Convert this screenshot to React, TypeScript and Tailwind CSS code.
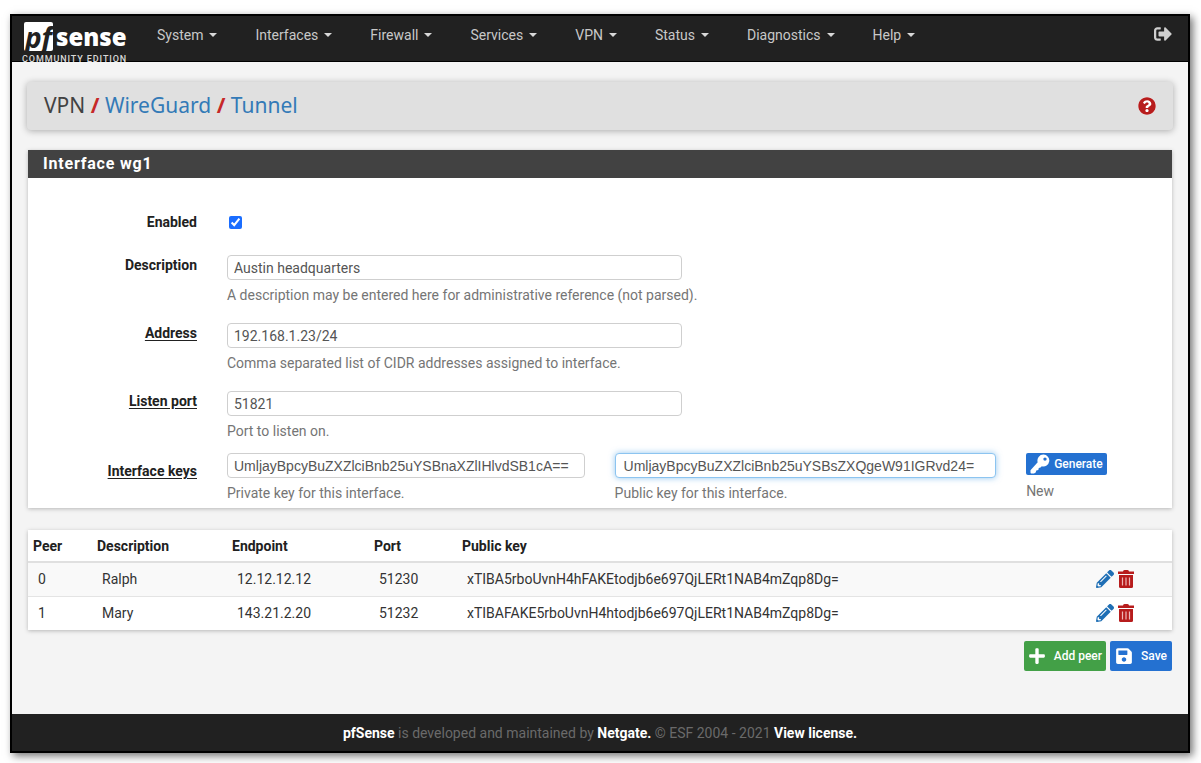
import { FaPencilAlt, FaPlus, FaQuestionCircle, FaSave, FaSignOutAlt } from "react-icons/fa"

const menuItems = ["System", "Interfaces", "Firewall", "Services", "VPN", "Status", "Diagnostics", "Help"]

const peers = [
  { id: 0, description: "Ralph", endpoint: "12.12.12.12", port: "51230", publicKey: "xTIBA5rboUvnH4hFAKEtodjb6e697QjLERt1NAB4mZqp8Dg=" },
  { id: 1, description: "Mary", endpoint: "143.21.2.20", port: "51232", publicKey: "xTIBAFAKE5rboUvnH4htodjb6e697QjLERt1NAB4mZqp8Dg=" },
]

const inputClass = "block w-full h-[25px] rounded border border-[#cfcfcf] bg-white px-1.5 text-sm text-[#555] outline-none"

function Logo() {
  return (
    <a href="#" aria-label="pfSense community edition" className="flex w-[108px] flex-col pt-1.5">
      <span className="flex items-center gap-[3px] pl-0.5">
        <span className="flex h-[29px] w-[29px] items-center justify-center rounded-xs bg-white font-['Open_Sans',sans-serif] text-[28px] leading-6 font-bold text-[#212121] italic">
          pf
        </span>
        <span className="font-['Open_Sans',sans-serif] text-2xl leading-6 font-extrabold text-white">sense</span>
      </span>
      <span className="text-[9px] leading-4 font-medium tracking-widest whitespace-nowrap text-[#d8d8d8]">COMMUNITY EDITION</span>
    </a>
  )
}

function KeyIcon() {
  return (
    <svg viewBox="0 0 20 20" className="h-5 w-5" aria-hidden="true">
      <path
        fill="currentColor"
        fillRule="evenodd"
        d="M13.500.5a6 6 0 1 1-1.700 11.800L10.500 13.600 8.800 14 8.300 16 6.300 16.400 5.700 18.400 4 19.500H1.500Q.5 19.500.5 18.500V16.200L7.700 8.300A6 6 0 0 1 13.500.5zM15 3.400a1.700 1.700 0 1 0 0 3.400 1.700 1.700 0 0 0 0-3.400z"
      />
    </svg>
  )
}

function TrashIcon() {
  return (
    <svg viewBox="0 0 16 18" className="h-[18px] w-4" fill="none" aria-hidden="true">
      <path d="M5 1.500Q5 0 6.500 0h3Q11 0 11 1.500h5V4H0V1.500z" fill="#b71c1c" />
      <path d="M1 5h14v11.500q0 1.500-1.500 1.500h-11Q1 18 1 16.500z" fill="#b71c1c" />
      <path d="M4.500 7.500v8M8 7.500v8M11.500 7.500v8" stroke="#eeb8b8" strokeWidth="1.200" />
    </svg>
  )
}

type FieldProps = {
  id: string
  label: string
  value: string
  help: string
  required?: boolean
}

function Field({ id, label, value, help, required }: FieldProps) {
  return (
    <div className="grid grid-cols-[169px_1fr] gap-x-[30px]">
      <label htmlFor={id} className={`text-right text-sm font-bold text-[#212121] ${required ? "underline underline-offset-2" : ""}`}>
        {label}
      </label>
      <div>
        <div className="max-w-[455px]">
          <input id={id} type="text" defaultValue={value} className={inputClass} />
        </div>
        <p className="mt-[5px] text-sm text-[#757575]">{help}</p>
      </div>
    </div>
  )
}

export default function App() {
  return (
    <div className="min-h-screen bg-white pt-3.5 pr-[11px] pb-3 pl-2.5 font-[Roboto,sans-serif]">
      <div className="border-2 border-black bg-[#f4f4f4] shadow-[3px_3px_8px_rgba(0,0,0,0.55)]">
        <header className="flex h-[46px] items-start border-b border-black bg-[#212121] pr-4 pl-2.5">
          <Logo />
          <nav className="flex flex-1 gap-[38px] pt-[9px] pl-[27px]">
            {menuItems.map((item) => (
              <a key={item} href="#" className="flex items-center gap-1.5 text-sm text-[#c8c8c8]">
                {item}
                <span className="h-0 w-0 border-x-4 border-t-4 border-x-transparent border-t-[#d8d8d8]" />
              </a>
            ))}
          </nav>
          <button type="button" aria-label="Log out" className="mt-[9px] text-[#d0d0d0]">
            <FaSignOutAlt size={18} />
          </button>
        </header>

        <main className="px-4 pt-5 pb-[43px]">
          <div className="-mx-px flex h-12 items-center justify-between rounded bg-[#e0e0e0] px-[17px] shadow-[0_1px_7px_rgba(0,0,0,0.3)]">
            <h1 className="font-['Noto_Sans',sans-serif] text-[21px] text-[#424242]">
              VPN <span className="font-bold text-[#c62828]">/</span>{" "}
              <a href="#" className="text-[#337ab7]">WireGuard</a> <span className="font-bold text-[#c62828]">/</span>{" "}
              <a href="#" className="text-[#337ab7]">Tunnel</a>
            </h1>
            <a href="#" aria-label="Help" className="rounded-full bg-white text-[#b71c1c]">
              <FaQuestionCircle size={18} />
            </a>
          </div>

          <form onSubmit={(e) => e.preventDefault()}>
            <section className="mt-5 bg-white pb-[5px] shadow-[0_1px_4px_rgba(0,0,0,0.25)]">
              <h2 className="bg-[#424242] px-[15px] text-base leading-7 font-bold tracking-wider text-white">Interface wg1</h2>

              <div className="mt-[34px] grid grid-cols-[169px_1fr] items-center gap-x-[30px]">
                <label htmlFor="enabled" className="text-right text-sm font-bold text-[#212121]">Enabled</label>
                <input id="enabled" type="checkbox" defaultChecked className="ml-0.5 h-[13px] w-[13px] accent-[#1a6dff]" />
              </div>

              <div className="mt-[23px] flex flex-col gap-[18px]">
                <Field id="description" label="Description" value="Austin headquarters" help="A description may be entered here for administrative reference (not parsed)." />
                <Field id="address" label="Address" value="192.168.1.23/24" help="Comma separated list of CIDR addresses assigned to interface." required />
                <Field id="port" label="Listen port" value="51821" help="Port to listen on." required />
              </div>

              <div className="mt-3 grid grid-cols-[169px_1fr] gap-x-[30px] pr-[30px]">
                <label htmlFor="privateKey" className="pt-2 text-right text-sm font-bold text-[#212121] underline underline-offset-2">Interface keys</label>
                <div className="grid grid-cols-[358fr_382fr_116fr] gap-x-[30px]">
                  <div>
                    <input id="privateKey" type="text" defaultValue="UmljayBpcyBuZXZlciBnb25uYSBnaXZlIHlvdSB1cA==" className={`${inputClass} font-['Liberation_Sans',sans-serif]`} />
                    <p className="mt-[5px] text-sm text-[#757575]">Private key for this interface.</p>
                  </div>
                  <div>
                    <input
                      type="text"
                      aria-label="Public key"
                      defaultValue="UmljayBpcyBuZXZlciBnb25uYSBsZXQgeW91IGRvd24="
                      className="block h-[25px] w-full rounded border border-[#8cc4f0] bg-white px-2 font-['Liberation_Sans',sans-serif] text-sm text-[#555] shadow-[0_0_6px_rgba(102,175,233,0.7)] outline-none"
                    />
                    <p className="mt-[5px] text-sm text-[#757575]">Public key for this interface.</p>
                  </div>
                  <div>
                    <button type="button" className="flex h-[22px] items-center gap-1 rounded-xs bg-[#2471d1] px-1 text-xs font-medium text-white">
                      <KeyIcon />
                      Generate
                    </button>
                    <p className="mt-1.5 text-sm text-[#757575]">New</p>
                  </div>
                </div>
              </div>
            </section>

            <table className="mt-[22px] w-full table-fixed bg-white text-left text-sm text-[#333] shadow-[0_1px_4px_rgba(0,0,0,0.25)]">
              <thead>
                <tr className="h-8 border-b-2 border-[#e0e0e0] text-[#212121]">
                  <th className="w-16 pl-[5px]">Peer</th>
                  <th className="w-[135px] pl-[5px]">Description</th>
                  <th className="w-[142px] pl-[5px]">Endpoint</th>
                  <th className="w-[88px] pl-[5px]">Port</th>
                  <th className="pl-[5px]">Public key</th>
                  <th className="w-20" aria-label="Actions" />
                </tr>
              </thead>
              <tbody>
                {peers.map((peer) => (
                  <tr key={peer.id} className="h-[34px] border-b border-[#e4e4e4] odd:bg-[#f9f9f9] last:border-b-0">
                    <td className="pl-2.5">{peer.id}</td>
                    <td className="pl-2.5">{peer.description}</td>
                    <td className="pl-2.5">{peer.endpoint}</td>
                    <td className="pl-2.5">{peer.port}</td>
                    <td className="pl-2.5">{peer.publicKey}</td>
                    <td>
                      <div className="flex items-center gap-1 pl-1">
                        <button type="button" aria-label={`Edit ${peer.description}`} className="text-[#1f6fb5]">
                          <FaPencilAlt size={18} />
                        </button>
                        <button type="button" aria-label={`Delete ${peer.description}`}>
                          <TrashIcon />
                        </button>
                      </div>
                    </td>
                  </tr>
                ))}
              </tbody>
            </table>

            <div className="mt-[11px] flex justify-end gap-1">
              <button type="button" className="flex h-[30px] items-center gap-2 rounded-xs bg-[#43a047] px-1 text-xs font-medium text-white">
                <FaPlus size={18} />
                Add peer
              </button>
              <button type="submit" className="flex h-[30px] items-center gap-2 rounded-xs bg-[#2471d1] px-[5px] text-xs font-medium text-white">
                <FaSave size={18} />
                Save
              </button>
            </div>
          </form>
        </main>

        <footer className="bg-[#212121] pt-[9px] pb-2 text-center text-sm text-[#6a6a6a]">
          <a href="#" className="font-bold text-white">pfSense</a> is developed and maintained by{" "}
          <a href="#" className="font-bold text-white">Netgate.</a> © ESF 2004 - 2021{" "}
          <a href="#" className="font-bold text-white">View license.</a>
        </footer>
      </div>
    </div>
  )
}
